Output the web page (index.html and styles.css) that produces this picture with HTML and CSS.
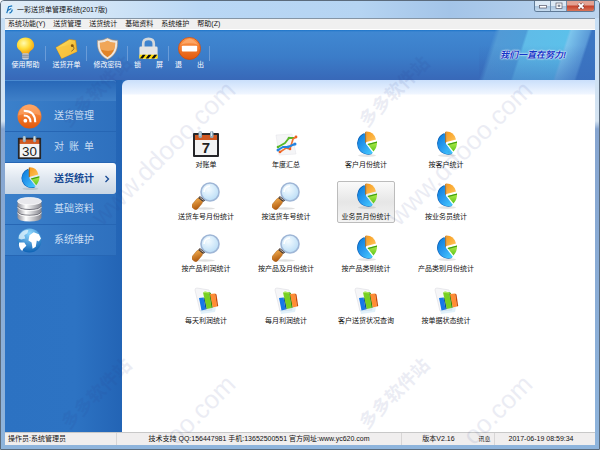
FILE: index.html
```html
<!DOCTYPE html>
<html lang="zh-CN">
<head>
    <meta charset="UTF-8">
    <meta name="viewport" content="width=device-width, initial-scale=1.0">
    <title>一彩送货单管理系统(2017版)</title>
    <link rel="stylesheet" href="styles.css">
</head>
<body>
    <!-- 共用圖標 -->
    <svg class="defs" width="0" height="0" aria-hidden="true">
        <defs>
            <linearGradient id="blue" x1="0" y1="0" x2="1" y2="1"><stop offset="0" stop-color="#0879d8"/><stop offset=".5" stop-color="#2a9cf0"/><stop offset="1" stop-color="#48d0ff"/></linearGradient>
            <linearGradient id="orange" x1="0" y1="0" x2="1" y2="1"><stop offset="0" stop-color="#f79a1c"/><stop offset="1" stop-color="#ffc55c"/></linearGradient>
            <linearGradient id="green" x1="0" y1="0" x2="0" y2="1"><stop offset="0" stop-color="#b6ee4c"/><stop offset="1" stop-color="#5cc41c"/></linearGradient>
            <linearGradient id="fire" x1="0" y1="0" x2="0" y2="1"><stop offset="0" stop-color="#ff9a4c"/><stop offset="1" stop-color="#e2580c"/></linearGradient>
            <linearGradient id="wood" x1="0" y1="0" x2="1" y2="1"><stop offset="0" stop-color="#f4b050"/><stop offset="1" stop-color="#a85008"/></linearGradient>
            <linearGradient id="metal" x1="0" y1="0" x2="1" y2="0"><stop offset="0" stop-color="#8e8e96"/><stop offset=".35" stop-color="#fff"/><stop offset="1" stop-color="#85858d"/></linearGradient>
            <linearGradient id="gold" x1="0" y1="0" x2="1" y2="1"><stop offset="0" stop-color="#ffeb70"/><stop offset="1" stop-color="#f0a010"/></linearGradient>
            <radialGradient id="bulb" cx=".4" cy=".35" r=".7"><stop offset="0" stop-color="#fffbb0"/><stop offset=".5" stop-color="#ffdc38"/><stop offset="1" stop-color="#f49b0c"/></radialGradient>
            <radialGradient id="lens" cx=".4" cy=".35" r=".7"><stop offset="0" stop-color="#f4fbff"/><stop offset="1" stop-color="#b8dcf6"/></radialGradient>
            <radialGradient id="sea" cx=".5" cy=".2" r=".8"><stop offset="0" stop-color="#8fd8ff"/><stop offset="1" stop-color="#0d62b4"/></radialGradient>
        </defs>
        <symbol id="i-pie" viewBox="0 0 28 28">
            <ellipse cx="15" cy="25.500" rx="9" ry="1.500" fill="#000" opacity=".1"/>
            <path d="M12.500 3A11 11 0 1 0 20 24L13.500 14Z" fill="#075cb4"/>
            <path d="M13.500 3.500A10.500 10.500 0 1 0 21 23L14 14Z" fill="url(#blue)"/>
            <path d="M14.500 1.500Q22 1.500 24 9.500L14.500 12Z" fill="url(#orange)"/>
            <path d="M14.500 1.500V12L13.200 13V2Z" fill="#b86a08"/>
            <path d="M15.500 14L25 11.500Q25.500 17 21.500 21.500Z" fill="url(#green)"/>
            <path d="M15.500 14L25 11.500V12.800L16.500 15Z" fill="#3f9e12"/>
        </symbol>
        <symbol id="i-search" viewBox="0 0 28 28">
            <ellipse cx="13" cy="26.500" rx="10" ry="1.200" fill="#000" opacity=".12"/>
            <path d="M10 15.500L13 18.500" stroke="#555" stroke-width="3"/>
            <rect x="-3.500" y="-5.500" width="7" height="12" rx="3" fill="url(#wood)" stroke="#a86018" stroke-width=".4" transform="translate(5.500 21.500) rotate(40)"/>
            <path d="M7 15L12 19" stroke="#4a3a30" stroke-width="2.600"/>
            <path d="M7.600 15.200L11.600 18.400" stroke="#d8d0c8" stroke-width=".8"/>
            <circle cx="18" cy="10" r="9" fill="url(#lens)" stroke="#9fb6d6" stroke-width="1.600"/>
            <path d="M12 10A6 6 0 0 1 18 4" fill="none" stroke="#fff" stroke-width="1.600"/>
        </symbol>
        <symbol id="i-bars" viewBox="0 0 28 28">
            <path d="M3 4Q3 2 5 2L17 4L20 24L8 25Z" fill="#f6f6f8" stroke="#dcdce2" stroke-width=".6"/>
            <path d="M8 24L24 21L23 26L9 28Z" fill="#a8d8f0" opacity=".35"/>
            <path d="M7 12L11.500 11.500L13.500 23.500L9.500 24.500Z" fill="#1778e8"/><path d="M11.500 11.500L13 12L14.800 23L13.500 23.500Z" fill="#0848a8"/>
            <path d="M11 6.500L17 6L19.500 22L14.800 23Z" fill="#78d022"/><path d="M17 6L18.800 7L20.800 21.500L19.500 22Z" fill="#328c0c"/><path d="M11 6.500L13 5.200L18.800 7L17 7.500Z" fill="#a8e858"/>
            <path d="M18 8L23 7.500L25 20.500L20.800 21.500Z" fill="#ff8c34"/><path d="M23 7.500L24.500 8.500L26.200 20L25 20.500Z" fill="#c84806"/>
        </symbol>
        <symbol id="i-day" viewBox="0 0 28 28">
            <rect x="1" y="3" width="26" height="24" rx="1" fill="#252528"/>
            <rect x="3" y="5" width="22" height="6" fill="#d05820"/>
            <rect x="3" y="10" width="22" height="15" fill="#f4f4f4"/>
            <rect x="6.500" y="1" width="3.500" height="7" rx="1.500" fill="#90aabb"/><rect x="18" y="1" width="3.500" height="7" rx="1.500" fill="#90aabb"/>
            <path d="M8 1.500V6M19.500 1.500V6" stroke="#d8e8f0"/>
        </symbol>
    </svg>

    <div class="window">
        <header class="titlebar">
            <svg class="app-icon" viewBox="0 0 10 10"><rect width="10" height="10" rx="1" fill="#d8eefc"/><path d="M2 9L4 2L8 1M3 6L7 4M5 9Q8 8 8 5" stroke="#1970b8" stroke-width="1.300" fill="none"/></svg>
            <h1 class="title">一彩送货单管理系统(2017版)</h1>
            <div class="window-btns">
                <button class="win-btn" aria-label="最小化"><svg viewBox="0 0 10 8"><rect x="1.500" y="3.500" width="7" height="2.500" fill="#fff" stroke="#556" stroke-width=".7"/></svg></button>
                <button class="win-btn" aria-label="最大化"><svg viewBox="0 0 10 8"><rect x="2" y="1" width="6" height="5.500" fill="#fff" stroke="#556" stroke-width=".7"/><rect x="4" y="3" width="2" height="1.500" fill="#9ab" stroke="#556" stroke-width=".5"/></svg></button>
                <button class="win-btn close" aria-label="关闭"><svg viewBox="0 0 10 8"><path d="M2.500 1.500L7.500 6.500M7.500 1.500L2.500 6.500" stroke="#633" stroke-width="3"/><path d="M2.500 1.500L7.500 6.500M7.500 1.500L2.500 6.500" stroke="#fff" stroke-width="1.800"/></svg></button>
            </div>
        </header>

        <div class="client">
            <nav class="menubar">
                <button>系统功能(Y)</button>
                <button>送货管理</button>
                <button>送货统计</button>
                <button>基础资料</button>
                <button>系统维护</button>
                <button>帮助(Z)</button>
            </nav>

            <div class="toolbar">
                <button class="tool">
                    <svg viewBox="0 0 24 24"><path d="M12 .5C6 .5 3 4.500 3 9C3 13 8 14 8.500 17.500H15.500C16 14 21 13 21 9C21 4.500 18 .5 12 .5Z" fill="url(#bulb)"/><rect x="8.500" y="17" width="7" height="6.500" rx="1.500" fill="#c8ccd4"/><path d="M8.500 19H15.500M8.500 21H15.500" stroke="#686c78" stroke-width=".8"/></svg>
                    <span>使用帮助</span>
                </button>
                <button class="tool">
                    <svg viewBox="0 0 24 24"><path d="M1 11L15 2.500L21.500 3.500L23 15L7 22.500Z" fill="url(#gold)" stroke="#d08c10" stroke-width=".6"/><path d="M1 11L18 8L23 15L7 22.500Z" fill="#f8c440" opacity=".8"/><circle cx="18" cy="9" r="1.500" fill="#8a5604"/><path d="M18 9Q22 12 17 15" stroke="#6a5530" fill="none" stroke-width=".8"/></svg>
                    <span>送货开单</span>
                </button>
                <button class="tool">
                    <svg viewBox="0 0 24 24"><path d="M12 1Q17 4 22.500 3.500C23 12 21 19 12 23.500C3 19 1 12 1.500 3.500Q7 4 12 1Z" fill="#f0e7dc" stroke="#aa8c70" stroke-width=".6"/><path d="M12 4Q16 6.500 20 6C20 13 18 17.500 12 21C6 17.500 4 13 4 6Q8 6.500 12 4Z" fill="#e18428"/><path d="M12 4Q16 6.500 20 6Q20 10 19 13Q13 16 5 13Q4 10 4 6Q8 6.500 12 4Z" fill="#f7b56c" opacity=".7"/></svg>
                    <span>修改密码</span>
                </button>
                <button class="tool wide">
                    <svg viewBox="0 0 24 24"><path d="M6.500 12V7Q6.500 2 12 2Q17.500 2 17.500 7V12" fill="none" stroke="#d4d8dc" stroke-width="2.800"/><rect x="2.500" y="10" width="19" height="13" rx="1.500" fill="#e4e4e4"/><rect x="2.500" y="18.500" width="19" height="4" fill="#ffdc00"/><path d="M3 22.500L6 18.500H9L6 22.500ZM9 22.500L12 18.500H15L12 22.500ZM15 22.500L18 18.500H21L18 22.500Z" fill="#111"/></svg>
                    <span><i>锁</i><i>屏</i></span>
                </button>
                <button class="tool wide">
                    <svg viewBox="0 0 24 24"><circle cx="12" cy="12" r="11.500" fill="url(#fire)" stroke="#d24b08" stroke-width=".8"/><path d="M3 8Q12 -4 21 8Q12 5 3 8Z" fill="#ffc08c" opacity=".5"/><rect x="4" y="9" width="16" height="6" rx="1" fill="#fff"/></svg>
                    <span><i>退</i><i>出</i></span>
                </button>
                <div class="banner"><em>我们一直在努力!</em></div>
            </div>

            <div class="main">
                <nav class="sidebar">
                    <div class="side-head"></div>
                    <a href="#" class="side-item">
                        <svg viewBox="0 0 24 24"><circle cx="12" cy="12" r="11.500" fill="url(#fire)"/><path d="M1 11Q4 0 12 .5Q20 0 23 11Q12 7 1 11Z" fill="#ffb27c" opacity=".5"/><circle cx="8" cy="16" r="1.800" fill="#fff"/><path d="M6.500 11Q13 11 13 17.500M6.500 6.500Q17.500 6.500 17.500 17.500" fill="none" stroke="#fff" stroke-width="2"/></svg>
                        <span>送货管理</span>
                    </a>
                    <a href="#" class="side-item">
                        <svg viewBox="0 0 28 28"><use href="#i-day"/><text x="14" y="23" class="cal-num">30</text></svg>
                        <span class="spread"><i>对</i><i>账</i><i>单</i></span>
                    </a>
                    <a href="#" class="side-item active">
                        <svg viewBox="0 0 28 28"><use href="#i-pie"/></svg>
                        <span>送货统计</span>
                        <svg class="arrow" viewBox="0 0 6 8"><path d="M1.500 1L4.500 4L1.500 7" fill="none" stroke="#174a94" stroke-width="1.300"/></svg>
                    </a>
                    <a href="#" class="side-item">
                        <svg viewBox="0 0 24 24"><path d="M.5 4V20Q1 23.500 12 23.500Q23 23.500 23.500 20V4Z" fill="url(#metal)"/><path d="M.5 8.500Q2 12 12 12Q22 12 23.500 8.500M.5 14Q2 17.500 12 17.500Q22 17.500 23.500 14" fill="none" stroke="#73737c"/><path d="M.5 9.500Q2 13 12 13Q22 13 23.500 9.500M.5 15Q2 18.500 12 18.500Q22 18.500 23.500 15" fill="none" stroke="#fff" stroke-width=".8"/><ellipse cx="12" cy="4" rx="11.500" ry="3.500" fill="#e8e8ec" stroke="#fff" stroke-width=".7"/></svg>
                        <span>基础资料</span>
                    </a>
                    <a href="#" class="side-item">
                        <svg viewBox="0 0 24 24"><circle cx="12" cy="12" r="11.500" fill="url(#sea)"/><path d="M2 7Q6 1 11 2L10 5L7 7L8 10L4 11L1.500 10Z" fill="#dff2fc" opacity=".8"/><path d="M2 14L7 14L9 17L6 20L5 22Q1 19 2 14ZM12 7L16 4L21 6L23 10L21 13L19 12L18 18L15 20L14 14L11 12Z" fill="#fff"/></svg>
                        <span>系统维护</span>
                    </a>
                </nav>

                <main class="content">
                    <div class="icon-grid">
                        <button class="entry"><svg viewBox="0 0 28 28"><use href="#i-day"/><text x="14" y="23" class="cal-num bold">7</text></svg><span>对账单</span></button>
                        <button class="entry">
                            <svg viewBox="0 0 28 28"><path d="M4 5L20 4L24 24L7 25Z" fill="#f5f5f7" stroke="#e2e2e8" stroke-width=".5"/><path d="M6 17L13 13L17 8L22 8" fill="none" stroke="#58b828" stroke-width="1.800"/><path d="M8 22L14 18L18 19L21 9L24 7" fill="none" stroke="#f07030" stroke-width="1.600"/><path d="M6 20L11 17L16 17L23 14" fill="none" stroke="#2484e0" stroke-width="2"/><g fill="#2484e0"><circle cx="6" cy="20" r="1.500"/><circle cx="16" cy="17" r="1.500"/><circle cx="23" cy="14" r="1.500"/></g><g fill="#f06020"><circle cx="8" cy="22" r="1.300"/><circle cx="24" cy="7" r="1.400"/><circle cx="18" cy="19" r="1.300"/></g><g fill="#58b828"><circle cx="6" cy="17" r="1.300"/><circle cx="17" cy="8" r="1.300"/></g></svg>
                            <span>年度汇总</span>
                        </button>
                        <button class="entry"><svg viewBox="0 0 28 28"><use href="#i-pie"/></svg><span>客户月份统计</span></button>
                        <button class="entry"><svg viewBox="0 0 28 28"><use href="#i-pie"/></svg><span>按客户统计</span></button>

                        <button class="entry"><svg viewBox="0 0 28 28"><use href="#i-search"/></svg><span>送货车号月份统计</span></button>
                        <button class="entry"><svg viewBox="0 0 28 28"><use href="#i-search"/></svg><span>按送货车号统计</span></button>
                        <button class="entry selected"><svg viewBox="0 0 28 28"><use href="#i-pie"/></svg><span>业务员月份统计</span></button>
                        <button class="entry"><svg viewBox="0 0 28 28"><use href="#i-pie"/></svg><span>按业务员统计</span></button>

                        <button class="entry"><svg viewBox="0 0 28 28"><use href="#i-search"/></svg><span>按产品利润统计</span></button>
                        <button class="entry"><svg viewBox="0 0 28 28"><use href="#i-search"/></svg><span>按产品及月份统计</span></button>
                        <button class="entry"><svg viewBox="0 0 28 28"><use href="#i-pie"/></svg><span>按产品类别统计</span></button>
                        <button class="entry"><svg viewBox="0 0 28 28"><use href="#i-pie"/></svg><span>产品类别月份统计</span></button>

                        <button class="entry"><svg viewBox="0 0 28 28"><use href="#i-bars"/></svg><span>每天利润统计</span></button>
                        <button class="entry"><svg viewBox="0 0 28 28"><use href="#i-bars"/></svg><span>每月利润统计</span></button>
                        <button class="entry"><svg viewBox="0 0 28 28"><use href="#i-bars"/></svg><span>客户送货状况查询</span></button>
                        <button class="entry"><svg viewBox="0 0 28 28"><use href="#i-bars"/></svg><span>按单据状态统计</span></button>
                    </div>
                </main>
            </div>

            <footer class="statusbar">
                <span class="operator">操作员:系统管理员</span>
                <span class="support">技术支持 QQ:156447981 手机:13652500551 官方网址:www.yc620.com</span>
                <span class="version">版本V2.16</span>
                <span class="msg">讯息</span>
                <span class="clock">2017-06-19 08:59:34</span>
            </footer>
        </div>
    </div>

    <!-- 水印 -->
    <svg class="watermark" aria-hidden="true">
        <g class="wm-url">
            <text transform="translate(237 92) rotate(-45)">www.ddooo.com</text>
            <text transform="translate(534 92) rotate(-45)">www.ddooo.com</text>
            <text transform="translate(237 386) rotate(-45)">oo.com</text>
            <text transform="translate(534 386) rotate(-45)">oo.com</text>
        </g>
        <g class="wm-name">
            <text transform="translate(69 128) rotate(-45)">多多软件站</text>
            <text transform="translate(367 128) rotate(-45)">多多软件站</text>
            <text transform="translate(69 430) rotate(-45)">多多软件站</text>
            <text transform="translate(367 430) rotate(-45)">多多软件站</text>
        </g>
    </svg>
</body>
</html>
```

FILE: styles.css
```css
* {
    box-sizing: border-box;
}
body {
    margin: 0;
    font-family: "Liberation Sans", "Noto Sans CJK SC", sans-serif;
    font-size: 7px;
    line-height: 10px;
    color: #111;
}
button {
    font: inherit;
    color: inherit;
    background: none;
    border: none;
    padding: 0;
    cursor: pointer;
}
i {
    font-style: normal;
}
svg {
    display: block;
}
.defs {
    position: absolute;
}
.window {
    display: flex;
    flex-direction: column;
    min-height: 100vh;
    padding: 0 4px 4px;
    border: 1px solid #5b6b7c;
    border-radius: 4px 4px 0 0;
    background: linear-gradient(#c4def6 0, #d5e4f2 120px, #86a5d0 128px, #8eb4dc 100%);
}

/* 標題欄 */
.titlebar {
    display: flex;
    align-items: center;
    height: 17px;
    margin: 0 -4px;
    padding-left: 4px;
    gap: 3px;
    border-radius: 3px 3px 0 0;
    background: linear-gradient(90deg, #e2edf7 0, #d2e5f6 100px, #b9d7f5 200px, #b5d4f2 60%, #a3c4e8 75%, #bcd5ee 100%);
}
.app-icon {
    width: 9px;
    height: 9px;
}
.title {
    margin: 0;
    font-size: 7px;
    font-weight: normal;
}
.window-btns {
    display: flex;
    align-self: flex-start;
    margin-left: auto;
    margin-right: 4px;
    height: 11px;
    border: 1px solid #5f7a96;
    border-top: none;
    border-radius: 0 0 3px 3px;
    overflow: hidden;
}
.win-btn {
    display: flex;
    align-items: center;
    justify-content: center;
    width: 16px;
    border-right: 1px solid #7590ac;
    background: linear-gradient(#dce9f5 45%, #a9c3dc 50%, #c6dcf0);
}
.win-btn svg {
    width: 10px;
    height: 8px;
}
.close {
    width: 27px;
    border-right: none;
    background: linear-gradient(#e3a292 40%, #c5412a 50%, #d87558);
}
.client {
    display: flex;
    flex-direction: column;
    flex: 1;
    border-top: 1px solid #8595a5;
    background: #fff;
}

/* 菜單 */
.menubar {
    display: flex;
    gap: 8px;
    height: 11px;
    padding-left: 3px;
    background: #f0f0f0;
    border-bottom: 1px solid #fff;
}

/* 工具欄 */
.toolbar {
    display: flex;
    height: 50px;
    color: #fff;
    background: linear-gradient(#1d75c9, #4088d2 2px, #3b7cc8 55%, #3868b8);
}
.tool {
    display: flex;
    flex-direction: column;
    align-items: center;
    width: 41px;
    padding-top: 7px;
    background: linear-gradient(transparent 16px, #6a9cd8 16px, #6a9cd8 31px, transparent 31px) right / 1px 100% no-repeat;
}
.tool svg {
    width: 23px;
    height: 23px;
}
.wide span {
    display: flex;
    gap: 15px;
}
.banner {
    display: flex;
    align-items: center;
    justify-content: center;
    width: 116px;
    margin-left: auto;
    padding-right: 8px;
    background: linear-gradient(transparent 30%, rgba(56, 104, 184, .5)), linear-gradient(108deg, transparent 12%, #529ad6 16%, #4d9dd8 36%, #60bce8 38%, #5cc0ea 68%, #7cc4ec 70%, #5b9bd8 84%, #3b76c3 86%);
}
.banner em {
    font-size: 9px;
    font-weight: bold;
    color: #1636c8;
    text-shadow: 0 0 1px #fff, 0 0 2px #fff, 0 0 2px #cfe8ff;
    white-space: nowrap;
}

/* 主體 */
.main {
    display: flex;
    flex: 1;
    background: #2c6dbd;
}
.sidebar {
    width: 117px;
    padding-right: 6px;
    background: linear-gradient(90deg, #2c72c2, #2d73c3 60%, #2364b5);
}
.side-head {
    height: 21px;
    border-top: 1px solid #4b8bd0;
    border-radius: 0 3px 0 0;
    background: linear-gradient(#2868b8, #3f80c8);
}
.side-item {
    display: flex;
    align-items: center;
    height: 31px;
    padding-left: 12px;
    gap: 12px;
    font-size: 10px;
    color: #c9def4;
    text-decoration: none;
    white-space: nowrap;
    background: linear-gradient(90deg, #3b80ca, #2e70be);
    border-bottom: 1px solid #2666b4;
}
.side-item svg {
    width: 25px;
    height: 25px;
    flex: none;
}
.side-item .arrow {
    width: 6px;
    height: 8px;
    margin-left: -2px;
}
.spread {
    display: flex;
    gap: 5px;
}
.active {
    font-weight: bold;
    color: #174a94;
    border-radius: 0 3px 3px 0;
    border-bottom: none;
    background: linear-gradient(#fafcfe, #dfe7f0 50%, #c9d6e4);
}
.cal-num {
    font-size: 15px;
    text-anchor: middle;
    fill: #222;
}
.bold {
    font-weight: bold;
}
.content {
    flex: 1;
    padding: 49px 0 0 44px;
    border-radius: 6px 0 0 0;
    background: linear-gradient(#cadffb, #f0f6ff 14px, #fff 15px);
}
.icon-grid {
    display: grid;
    grid-template-columns: repeat(4, 80px);
    grid-auto-rows: 42px;
    gap: 10px 0;
    justify-items: center;
}
.entry {
    display: flex;
    flex-direction: column;
    align-items: center;
    justify-content: space-between;
    min-width: 58px;
    border: 1px solid transparent;
    border-radius: 2px;
    white-space: nowrap;
}
.entry svg {
    width: 28px;
    height: 28px;
}
.selected {
    border-color: #bcbcbc;
    background: linear-gradient(#fafafa, #e6e6e6 50%, #f4f4f4);
}

/* 狀態欄 */
.statusbar {
    display: flex;
    height: 13px;
    line-height: 12px;
    border-top: 1px solid #c8c8c8;
    background: #f0eeee;
    text-align: center;
    white-space: nowrap;
}
.statusbar span {
    border-right: 1px solid #d8d6d6;
}
.statusbar .operator {
    width: 112px;
    padding-left: 3px;
    text-align: left;
}
.statusbar .support {
    flex: 1;
}
.statusbar .version {
    width: 73px;
    border-right: none;
}
.statusbar .msg {
    width: 20px;
    font-size: 6px;
}
.statusbar .clock {
    width: 100px;
    padding-right: 8px;
    border-right: none;
}

.watermark {
    position: absolute;
    top: 0;
    left: 0;
    width: 100%;
    height: 100%;
    pointer-events: none;
    fill: #2a3c8c;
    opacity: .09;
}
.wm-url {
    font-size: 26px;
    text-anchor: end;
}
.wm-name {
    font-size: 18px;
    font-weight: bold;
}
```
